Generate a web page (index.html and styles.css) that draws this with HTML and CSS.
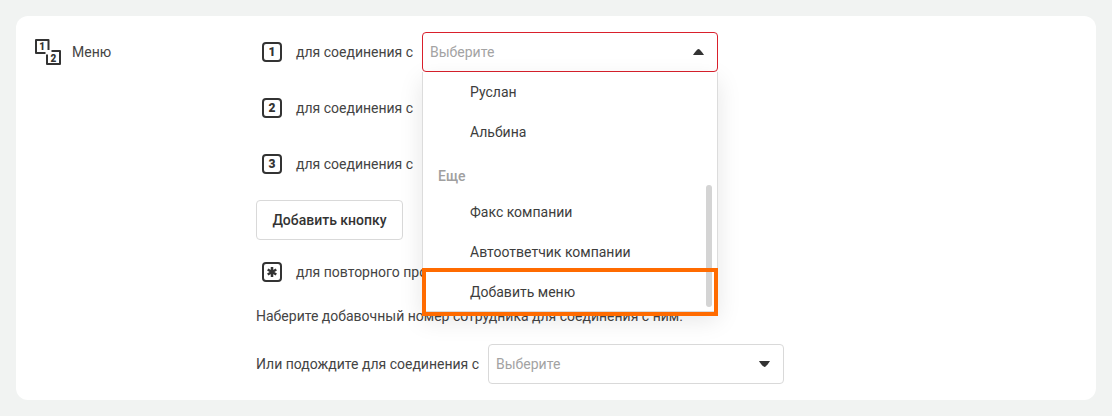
FILE: index.html
```html
<!DOCTYPE html>
<html lang="ru">
<head>
    <meta charset="UTF-8">
    <meta name="viewport" content="width=device-width, initial-scale=1.0">
    <title>Меню</title>
    <link rel="stylesheet" href="styles.css">
</head>
<body>
    <div class="card">
        <div class="side">
            <svg class="side-icon" width="28" height="28" viewBox="0 0 28 28">
                <path class="side-box" d="M10.500 14H1V1H13.500V11" />
                <path class="side-box" d="M12 15.500V25H25V12H16.500" />
                <text class="side-num" x="7.200" y="11">1</text>
                <text class="side-num" x="18.500" y="22.500">2</text>
            </svg>
            <span class="side-title">Меню</span>
        </div>

        <div class="content">
            <div class="row">
                <span class="key">1</span>
                <span class="row-label">для соединения с</span>
                <div class="select select-open">
                    <span class="placeholder">Выберите</span>
                    <svg class="arrow" width="11" height="6" viewBox="0 0 11 6">
                        <path d="M0 6C0.500 5 4 0 5.500 0S10.500 5 11 6Z" />
                    </svg>
                    <div class="dropdown">
                        <div class="option">Руслан</div>
                        <div class="option">Альбина</div>
                        <div class="group">Еще</div>
                        <div class="option">Факс компании</div>
                        <div class="option">Автоответчик компании</div>
                        <div class="option">Добавить меню</div>
                        <div class="scrollbar"></div>
                        <div class="highlight"></div>
                    </div>
                </div>
            </div>

            <div class="row">
                <span class="key">2</span>
                <span class="row-label">для соединения с</span>
                <div class="select"></div>
            </div>

            <div class="row">
                <span class="key">3</span>
                <span class="row-label">для соединения с</span>
                <div class="select"></div>
            </div>

            <button class="add-btn">Добавить кнопку</button>

            <div class="row row-star">
                <span class="key">
                    <svg width="12" height="12" viewBox="0 0 12 12">
                        <path class="star" d="M6 1V11M1.700 3.500L10.300 8.500M10.300 3.500L1.700 8.500" />
                    </svg>
                </span>
                <span class="row-label">для повторного прослушивания меню</span>
            </div>

            <p class="note">Наберите добавочный номер сотрудника для соединения с ним.</p>

            <div class="row row-last">
                <span class="row-label-plain">Или подождите для соединения с</span>
                <div class="select">
                    <span class="placeholder">Выберите</span>
                    <svg class="arrow" width="11" height="6" viewBox="0 0 11 6">
                        <path d="M0 0C0.500 1 4 6 5.500 6S10.500 1 11 0Z" />
                    </svg>
                </div>
            </div>
        </div>
    </div>
</body>
</html>
```

FILE: styles.css
```css
* {
    box-sizing: border-box;
}
body {
    margin: 0;
    height: 416px;
    padding: 16px;
    background-color: #f1f3f2;
    font-family: Roboto, "Noto Sans", sans-serif;
    font-size: 14px;
    color: #333;
    overflow: hidden;
}
.card {
    display: flex;
    height: 384px;
    padding: 16px 16px 16px 19px;
    background-color: #fff;
    border-radius: 12px;
}
.side {
    display: flex;
    width: 221px;
    height: 40px;
    align-items: center;
}
.side-icon {
    margin-top: 2px;
    margin-right: 9px;
}
.side-box {
    fill: none;
    stroke: #333;
    stroke-width: 2;
    stroke-linejoin: round;
}
.side-num {
    font-size: 10px;
    font-weight: 900;
    fill: #333;
    text-anchor: middle;
}
.side-title {
    color: #444;
}
.content {
    display: flex;
    flex-direction: column;
}
.row {
    display: flex;
    height: 40px;
    margin-bottom: 16px;
    align-items: center;
}
.row-star {
    margin-top: 12px;
    margin-bottom: 12px;
}
.row-last {
    margin-bottom: 0;
}
.key {
    display: flex;
    width: 20px;
    height: 20px;
    margin-left: 6px;
    margin-right: 14px;
    align-items: center;
    justify-content: center;
    border: 2px solid #333;
    border-radius: 4px;
    font-size: 12px;
    font-weight: 900;
}
.star {
    fill: none;
    stroke: #333;
    stroke-width: 2.5;
}
.row-label {
    width: 126px;
    white-space: nowrap;
    color: #444;
}
.row-label-plain {
    width: 232px;
    white-space: nowrap;
    color: #444;
}
.select {
    position: relative;
    display: flex;
    width: 296px;
    height: 40px;
    padding: 0 13px 0 7px;
    align-items: center;
    justify-content: space-between;
    border: 1px solid #d9d9d9;
    border-radius: 4px;
    background-color: #fff;
}
.select-open {
    border-color: #d9202c;
    z-index: 2;
}
.placeholder {
    color: #a3a3a3;
}
.arrow {
    fill: #333;
}
.dropdown {
    position: absolute;
    top: 39px;
    left: -1px;
    width: 296px;
    height: 240px;
    border: 1px solid #dcdcdc;
    border-top: none;
    border-radius: 0 0 4px 4px;
    background-color: #fff;
    box-shadow: 0 8px 24px rgba(0, 0, 0, 0.1);
}
.option {
    height: 40px;
    padding-left: 47px;
    line-height: 40px;
    color: #3d3d3d;
}
.group {
    height: 40px;
    padding-top: 16px;
    padding-left: 15px;
    line-height: 16px;
    color: #a0a0a0;
    font-weight: 500;
}
.scrollbar {
    position: absolute;
    top: 113px;
    right: 5px;
    width: 6px;
    height: 122px;
    border-radius: 3px;
    background-color: #d4d4d4;
}
.highlight {
    position: absolute;
    top: 196px;
    left: -1px;
    right: -1px;
    height: 48px;
    border: 4px solid #ff6b00;
}
.add-btn {
    width: 147px;
    height: 40px;
    padding: 0;
    border: 1px solid #d9d9d9;
    border-radius: 4px;
    background-color: #fff;
    font-family: inherit;
    font-size: 14px;
    font-weight: 500;
    color: #333;
}
.note {
    height: 24px;
    margin: 0 0 16px;
    line-height: 24px;
    color: #444;
}
```
